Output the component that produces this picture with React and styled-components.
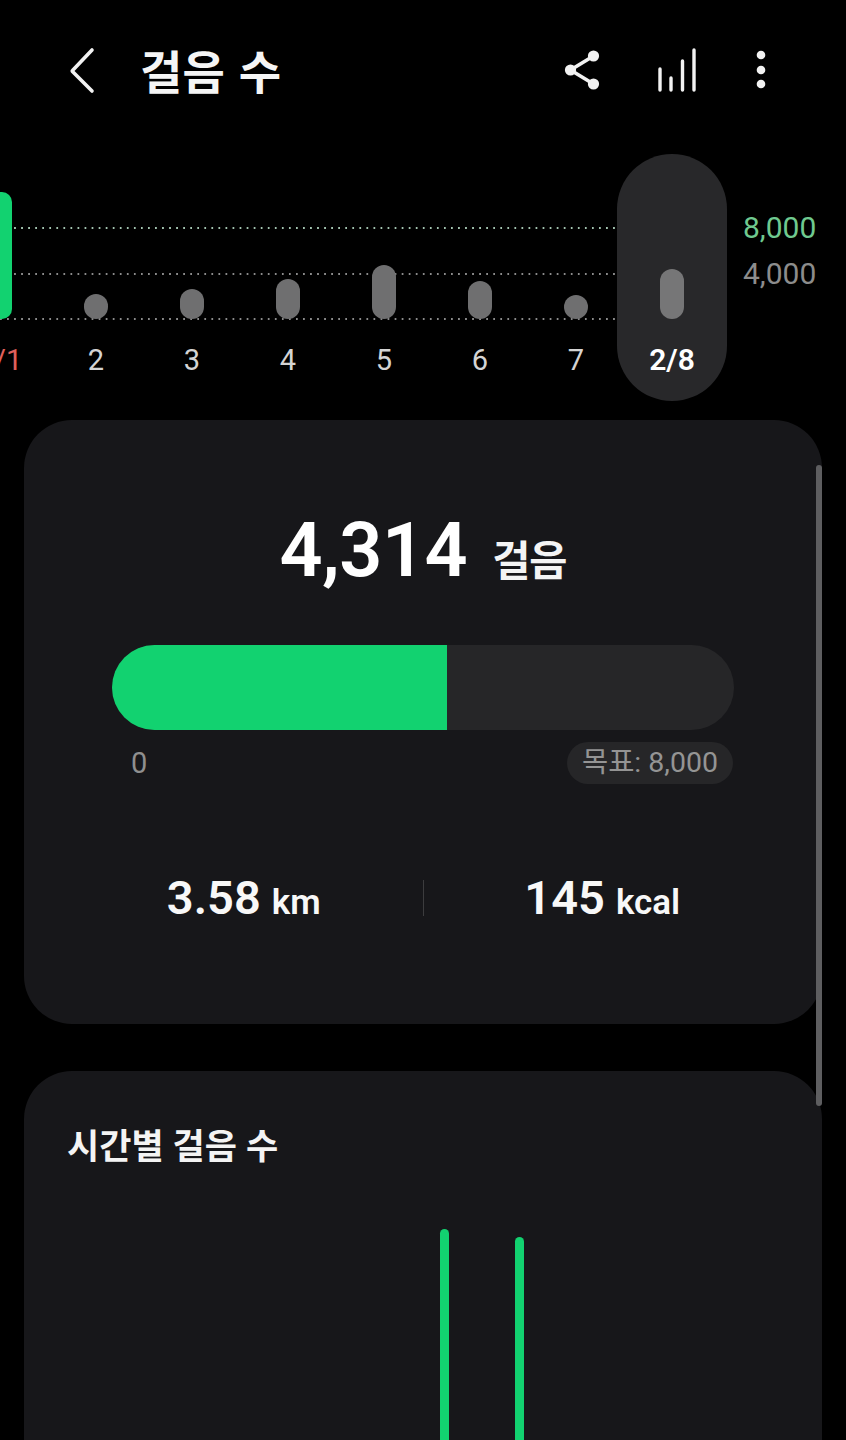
import React from 'react';
import styled, { createGlobalStyle } from 'styled-components';

const Global = createGlobalStyle`
  html, body { margin: 0; padding: 0; background: #000; }
  body { font-family: Roboto, "Noto Sans CJK KR", sans-serif; }
`;
const KR = `"Noto Sans CJK KR", sans-serif`;
const NUM = `Roboto, "Noto Sans CJK KR", sans-serif`;

const Screen = styled.div`
  position: relative; width: 846px; height: 1440px; overflow: hidden; background: #000; color: #fff;
`;
const Header = styled.header`
  display: flex; align-items: center; height: 140px; padding-left: 68px;
`;
const Title = styled.h1`
  margin: -2px 0 0 44px; font: 700 46px/1 ${KR}; color: #f5f5f5; flex: 1; letter-spacing: 0.2px; word-spacing: 3px;
`;
const HeaderIcon = styled.svg`
  display: block; width: ${p => p.$w}px; height: 50px; margin-right: ${p => p.$mr}px;
  fill: none; stroke: #f2f2f2; stroke-linecap: round;
`;
const ChartWrap = styled.section`
  position: relative; display: flex; height: 280px; padding-top: 14px; box-sizing: border-box;
`;
const GridLine = styled.div`
  position: absolute; left: 0; width: 616px; height: 2px; top: ${p => p.$top}px;
  background-image: linear-gradient(to right, ${p => p.$color} 2px, transparent 2px);
  background-size: 7.05px 2px;
`;
const Columns = styled.div`
  position: relative; display: flex; margin-left: -48px; height: 247px;
`;
const Column = styled.div`
  display: flex; flex-direction: column; align-items: center; box-sizing: border-box;
  width: ${p => (p.$selected ? 110 : 96)}px;
  margin: ${p => (p.$selected ? '0 -7px' : '0')};
  height: 247px;
  background: ${p => (p.$selected ? '#28282a' : 'transparent')};
  border-radius: 55px;
`;
const BarSlot = styled.div`
  display: flex; align-items: flex-end; height: 165px;
`;
const Bar = styled.div`
  width: 24px; height: ${p => p.$h}px;
  background: ${p => (p.$goal ? '#12d270' : p.$selected ? '#767677' : '#6f6f70')};
  border-radius: ${p => (p.$goal ? 10 : 12)}px;
`;
const DayLabel = styled.div`
  margin-top: 21px; font: ${p => (p.$selected ? 600 : 400)} ${p => (p.$selected ? 30 : 29)}px/40px ${NUM};
  color: ${p => (p.$selected ? '#fff' : p.$red ? '#e0605c' : '#d4d4d4')};
  white-space: nowrap;
`;
const Axis = styled.div`
  position: relative; padding: 51px 0 0 23px; font: 400 30px/46px ${NUM}; color: #8c8c8c;
`;
const AxisGoal = styled.div`color: #6fc98f;`;
const Card = styled.section`
  width: 798px; margin-left: 24px; background: #17171a; border-radius: 48px;
  box-sizing: border-box; height: ${p => p.$h}px;
`;
const Summary = styled(Card)`
  display: flex; flex-direction: column; align-items: center; padding-top: 84px; margin-bottom: 47px;
`;
const Total = styled.div`
  display: flex; align-items: baseline; justify-content: center; height: 92px; gap: 25px;
`;
const TotalValue = styled.span`
  font: 600 75.5px/92px ${NUM}; color: #fff; letter-spacing: -0.5px;
`;
const TotalUnit = styled.span`
  font: 700 41.5px/1 ${KR}; color: #f4f4f4; letter-spacing: -1px;
`;
const Track = styled.div`
  width: 622px; height: 85px; margin-top: 49px; background: #262628; border-radius: 42.5px; overflow: hidden;
`;
const Fill = styled.div`
  height: 100%; background: #12d270;
`;
const RangeRow = styled.div`
  display: flex; align-items: center; justify-content: space-between;
  width: 622px; height: 42px; margin-top: 12px; padding-left: 19px; box-sizing: border-box;
`;
const RangeMin = styled.span`font: 400 29px/1 ${NUM}; color: #8f8f8f;`;
const GoalChip = styled.span`
  display: flex; align-items: center; height: 42px; padding: 0 15px; border-radius: 21px;
  background: #262628; font: 400 28.5px/1 ${NUM}, ${KR}; color: #949494; margin-right: 1px;
`;
const Stats = styled.div`
  display: grid; grid-template-columns: 1fr 1px 1fr; align-items: center; width: 716px; margin-top: 90px; height: 36px;
`;
const Stat = styled.div`
  display: flex; align-items: baseline; justify-content: center; gap: 11px;
`;
const StatValue = styled.span`font: 600 47px/1 ${NUM}; color: #f8f8f8;`;
const StatUnit = styled.span`font: 600 35px/1 ${NUM}; color: #f8f8f8;`;
const Divider = styled.div`height: 36px; background: #3c3c3e;`;
const HourlyCard = styled(Card)`
  padding: 54px 0 0 43px; overflow: hidden;
`;
const HourlyTitle = styled.h2`
  margin: -1px 0 1px; font: 700 35px/40px ${KR}; color: #f4f4f4; letter-spacing: 0; word-spacing: 1px;
`;
const HourlyBars = styled.div`
  display: flex; align-items: flex-start; gap: 66px; margin: 65px 0 0 373px;
`;
const HourlyBar = styled.div`
  width: 9px; height: 300px; margin-top: ${p => p.$top}px; background: #12d270; border-radius: 4.5px 4.5px 0 0;
`;
const ScrollThumb = styled.div`
  position: absolute; left: 816px; top: 465px; width: 6px; height: 641px; border-radius: 3px; background: #5e5e60;
`;

const days = [
  { label: '1/1', h: 127, goal: true, red: true },
  { label: '2', h: 25 },
  { label: '3', h: 30 },
  { label: '4', h: 40 },
  { label: '5', h: 54 },
  { label: '6', h: 38 },
  { label: '7', h: 24 },
  { label: '2/8', h: 50, selected: true },
];

export default function App() {
  return (
    <Screen>
      <Global />
      <Header>
        <HeaderIcon $w={28} $mr={0} viewBox="0 0 28 50" strokeWidth="3.6" style={{ strokeLinejoin: 'round' }}>
          <path d="M24 5 L4.5 25.5 Q4 26 4.5 26.5 L24 46" />
        </HeaderIcon>
        <Title>걸음 수</Title>
        <HeaderIcon $w={40} $mr={54} viewBox="0 0 40 50">
          <path d="M30.5 11 L7.5 25 L30.5 39" strokeWidth="3.6" />
          <g fill="#f2f2f2" stroke="none">
            <circle cx="7.5" cy="25" r="5.6" />
            <circle cx="30.5" cy="11" r="5.6" />
            <circle cx="30.5" cy="39" r="5.6" />
          </g>
        </HeaderIcon>
        <HeaderIcon $w={40} $mr={58} viewBox="0 0 40 50" strokeWidth="3.4">
          <path d="M3 24 V45 M14 33 V45 M25.5 16 V45 M37 5 V45" />
        </HeaderIcon>
        <HeaderIcon $w={12} $mr={79} viewBox="0 0 12 50">
          <g fill="#f2f2f2" stroke="none">
            <circle cx="6" cy="10" r="4.3" />
            <circle cx="6" cy="25" r="4.3" />
            <circle cx="6" cy="39" r="4.3" />
          </g>
        </HeaderIcon>
      </Header>
      <ChartWrap>
        <GridLine $top={87} $color="#a3c4b0" />
        <GridLine $top={133} $color="#8b8b8b" />
        <GridLine $top={178} $color="#8b8b8b" />
        <Columns>
          {days.map(d => (
            <Column key={d.label} $selected={d.selected}>
              <BarSlot>
                <Bar $h={d.h} $goal={d.goal} $selected={d.selected} />
              </BarSlot>
              <DayLabel $selected={d.selected} $red={d.red}>{d.label}</DayLabel>
            </Column>
          ))}
        </Columns>
        <Axis>
          <AxisGoal>8,000</AxisGoal>
          <div>4,000</div>
        </Axis>
      </ChartWrap>
      <Summary $h={604}>
        <Total>
          <TotalValue>4,314</TotalValue>
          <TotalUnit>걸음</TotalUnit>
        </Total>
        <Track>
          <Fill style={{ width: `${(4314 / 8000) * 100}%` }} />
        </Track>
        <RangeRow>
          <RangeMin>0</RangeMin>
          <GoalChip>목표: 8,000</GoalChip>
        </RangeRow>
        <Stats>
          <Stat><StatValue>3.58</StatValue><StatUnit>km</StatUnit></Stat>
          <Divider />
          <Stat><StatValue>145</StatValue><StatUnit>kcal</StatUnit></Stat>
        </Stats>
      </Summary>
      <HourlyCard $h={500}>
        <HourlyTitle>시간별 걸음 수</HourlyTitle>
        <HourlyBars>
          <HourlyBar $top={0} />
          <HourlyBar $top={8} />
        </HourlyBars>
      </HourlyCard>
      <ScrollThumb />
    </Screen>
  );
}
